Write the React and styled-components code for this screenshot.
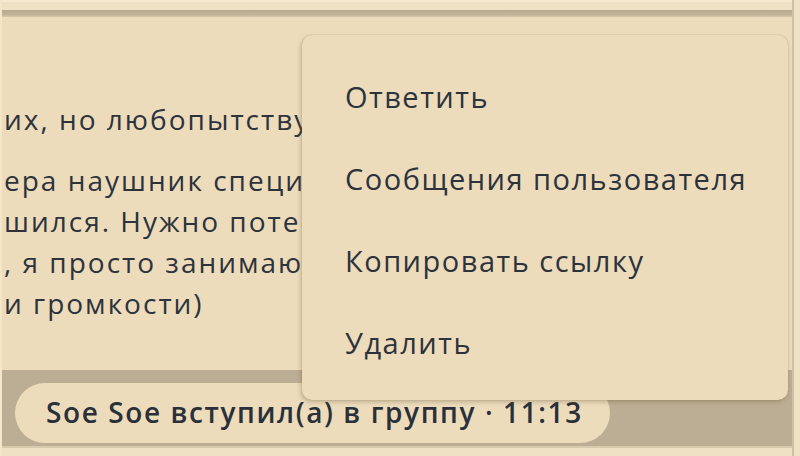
import React from 'react';
import styled, { createGlobalStyle } from 'styled-components';

const GlobalStyle = createGlobalStyle`
  html, body {
    margin: 0;
    padding: 0;
    background: #ecdcbc;
  }
  * { box-sizing: border-box; }
`;

const Screen = styled.div`
  position: relative;
  width: 800px;
  height: 456px;
  overflow: hidden;
  display: flex;
  font-family: 'Open Sans', 'Noto Sans', sans-serif;
  color: #2e333b;
  background: #ecdcbc;
`;

const Main = styled.div`
  flex: 1;
  display: flex;
  flex-direction: column;
  border-left: 2px solid #f3e6c9;
  min-width: 0;
`;

const TopStrip = styled.div`
  height: 10px;
  background: #efe1c3;
  border-top: 2px solid #f6ebd0;
`;

const ShadowBand = styled.div`
  height: 7px;
  background: linear-gradient(to bottom, #b7a98e, #c2b499 70%, #d6c8ab);
`;

const Bubble = styled.div`
  height: 353px;
  padding: 82px 0 0 2px;
  background: #ecdcbc;
  overflow: hidden;
`;

const Paragraph = styled.p`
  margin: 0 0 ${p => p.gap}px;
  font-size: 28px;
  font-weight: 500;
  letter-spacing: 2px;
  line-height: 41px;
  white-space: nowrap;
`;

const Line = styled.span`
  display: block;
`;

const Wallpaper = styled.div`
  flex: 1;
  background: #bcae94;
  padding: 13px 0 0 13px;
`;

const ServicePill = styled.div`
  display: inline-flex;
  align-items: center;
  height: 60px;
  padding: 0 27px 2px 31px;
  border-radius: 30px;
  background: #ecdcbc;
  font-size: 28px;
  font-weight: 600;
  letter-spacing: 1.6px;
  color: #2b3038;
  white-space: nowrap;
`;

const BottomStrip = styled.div`
  height: 10px;
  background: #efe2c4;
  border-top: 2px solid #d8caad;
`;

const RightEdge = styled.div`
  width: 8px;
  background: #efe2c4;
  border-left: 2px solid #cfc0a3;
`;

const Menu = styled.ul`
  position: absolute;
  left: 302px;
  top: 35px;
  width: 486px;
  margin: 0;
  padding: 20px 0 17px;
  list-style: none;
  background: #ecdcbc;
  border-radius: 10px;
  box-shadow: -1px 2px 4px rgba(110, 90, 55, 0.35), 0 0 1px rgba(110, 90, 55, 0.4);
`;

const MenuItem = styled.li`
  height: 82px;
  display: flex;
  align-items: center;
  padding-left: 43px;
  font-size: 29px;
  font-weight: 500;
  letter-spacing: 1.5px;
  color: #2e333b;
  white-space: nowrap;
  cursor: pointer;
`;

const menuItems = ['Ответить', 'Сообщения пользователя', 'Копировать ссылку', 'Удалить'];

export default function App() {
  return (
    <>
      <GlobalStyle />
      <Screen>
        <Main>
          <TopStrip />
          <ShadowBand />
          <Bubble>
            <Paragraph gap={20}>
              <Line>их, но любопытствующим было бы</Line>
            </Paragraph>
            <Paragraph gap={0}>
              <Line>ера наушник специально сделан</Line>
              <Line>шился. Нужно потестировать на</Line>
              <Line>, я просто занимаюсь этим уже</Line>
              <Line>и громкости)</Line>
            </Paragraph>
          </Bubble>
          <Wallpaper>
            <ServicePill>Soe Soe вступил(а) в группу · 11:13</ServicePill>
          </Wallpaper>
          <BottomStrip />
        </Main>
        <RightEdge />
        <Menu>
          {menuItems.map(item => (
            <MenuItem key={item}>{item}</MenuItem>
          ))}
        </Menu>
      </Screen>
    </>
  );
}
